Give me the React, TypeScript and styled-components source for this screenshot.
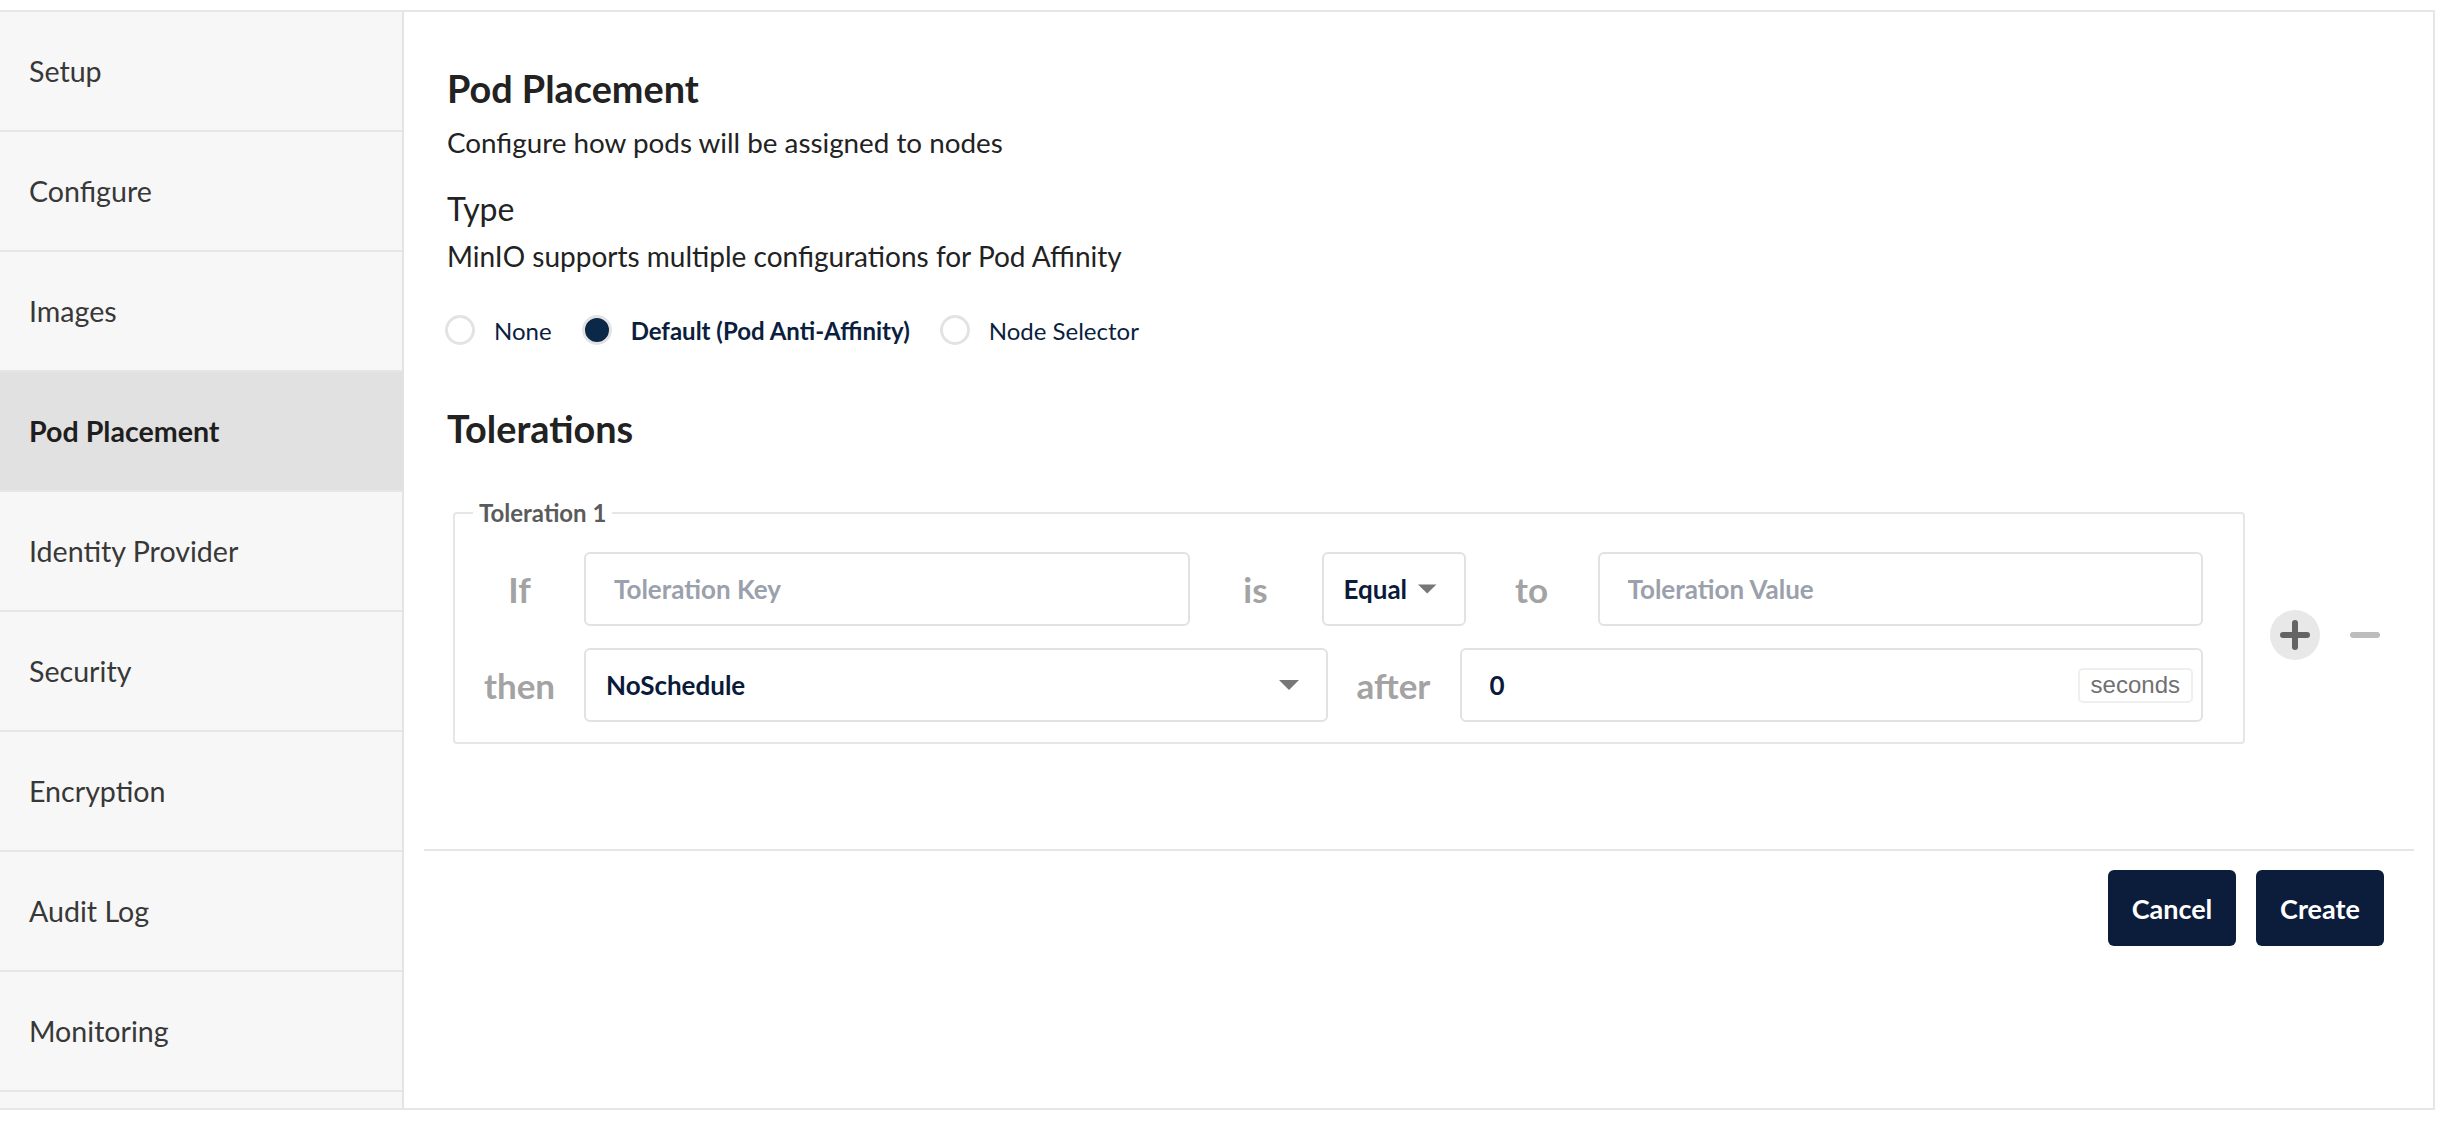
import React from "react";
import styled, { createGlobalStyle } from "styled-components";

const steps = [
  "Setup",
  "Configure",
  "Images",
  "Pod Placement",
  "Identity Provider",
  "Security",
  "Encryption",
  "Audit Log",
  "Monitoring",
];

const affinityTypes = [
  { label: "None", checked: false },
  { label: "Default (Pod Anti-Affinity)", checked: true },
  { label: "Node Selector", checked: false },
];

const GlobalStyle = createGlobalStyle`
  html, body {
    margin: 0;
    padding: 0;
    background: #ffffff;
  }
  body {
    font-family: Lato, "Noto Sans", sans-serif;
  }
  * {
    box-sizing: border-box;
  }
`;

const Arrow = () => (
  <svg width="20" height="10" viewBox="0 0 20 10">
    <path d="M0 0 L20 0 L10 10 Z" fill="#777777" />
  </svg>
);

const PlusIcon = () => (
  <svg width="30" height="30" viewBox="0 0 30 30">
    <path
      d="M15 3 V27 M3 15 H27"
      stroke="#646464"
      strokeWidth="6"
      strokeLinecap="round"
    />
  </svg>
);

const MinusIcon = () => (
  <svg width="30" height="6" viewBox="0 0 30 6">
    <path d="M3 3 H27" stroke="#bdbdbd" strokeWidth="6" strokeLinecap="round" />
  </svg>
);

export default function App() {
  return (
    <>
      <GlobalStyle />
      <Frame>
        <Sidebar>
          {steps.map((s) => (
            <NavItem key={s} $active={s === "Pod Placement"}>
              {s}
            </NavItem>
          ))}
        </Sidebar>
        <Main>
          <Content>
            <Title>Pod Placement</Title>
            <Description>Configure how pods will be assigned to nodes</Description>
            <SubTitle>Type</SubTitle>
            <TypeHint>MinIO supports multiple configurations for Pod Affinity</TypeHint>
            <RadioGroup>
              {affinityTypes.map((t) => (
                <RadioOption key={t.label} $checked={t.checked}>
                  <RadioDot $checked={t.checked} />
                  {t.label}
                </RadioOption>
              ))}
            </RadioGroup>

            <Title $spaced>Tolerations</Title>

            <TolerationRow>
              <TolerationSet>
                <Legend>Toleration 1</Legend>
                <Rows>
                  <Row $columns="129px 1fr 132px 144px 132px 1fr">
                    <Word>If</Word>
                    <TextField>
                      <Input placeholder="Toleration Key" />
                    </TextField>
                    <Word>is</Word>
                    <SelectBox>
                      Equal
                      <Arrow />
                    </SelectBox>
                    <Word>to</Word>
                    <TextField>
                      <Input placeholder="Toleration Value" />
                    </TextField>
                  </Row>
                  <Row $columns="129px 1fr 132px 1fr">
                    <Word>then</Word>
                    <SelectBox $spread>
                      NoSchedule
                      <Arrow />
                    </SelectBox>
                    <Word>after</Word>
                    <TextField>
                      <Input defaultValue="0" />
                      <Unit>seconds</Unit>
                    </TextField>
                  </Row>
                </Rows>
              </TolerationSet>
              <Actions>
                <AddButton>
                  <PlusIcon />
                </AddButton>
                <RemoveButton>
                  <MinusIcon />
                </RemoveButton>
              </Actions>
            </TolerationRow>
          </Content>
          <Footer>
            <Button>Cancel</Button>
            <Button>Create</Button>
          </Footer>
        </Main>
      </Frame>
    </>
  );
}

const Frame = styled.div`
  margin-top: 10px;
  width: 2435px;
  height: 1100px;
  border: 2px solid #e6e6e6;
  border-left: none;
  display: flex;
  overflow: hidden;
`;

const Sidebar = styled.nav`
  width: 404px;
  flex-shrink: 0;
  background: #f7f7f7;
  border-right: 2px solid #e3e3e3;
  display: flex;
  flex-direction: column;
`;

const NavItem = styled.div<{ $active?: boolean }>`
  height: 120px;
  flex-shrink: 0;
  display: flex;
  align-items: center;
  padding-left: 29px;
  border-bottom: 2px solid #e6e6e6;
  background: ${({ $active }) => ($active ? "#e1e1e1" : "transparent")};
  font-size: 28.6px;
  font-weight: ${({ $active }) => ($active ? 700 : 400)};
  color: ${({ $active }) => ($active ? "#1e1e1e" : "#383838")};
`;

const Main = styled.main`
  flex: 1;
  display: flex;
  flex-direction: column;
  padding-top: 55px;
  min-width: 0;
`;

const Content = styled.div`
  padding: 0 49px 0 43px;
`;

const Title = styled.h2<{ $spaced?: boolean }>`
  margin: ${({ $spaced }) => ($spaced ? "56px 0 0" : "0")};
  font-size: 37.8px;
  line-height: 44px;
  font-weight: 700;
  color: #222222;
`;

const Description = styled.p`
  margin: 15px 0 0;
  font-size: 27.8px;
  line-height: 34px;
  color: #222222;
`;

const SubTitle = styled.h3`
  margin: 30px 0 0;
  font-size: 32px;
  line-height: 38px;
  font-weight: 400;
  color: #222222;
`;

const TypeHint = styled(Description)`
  margin-top: 11px;
  font-size: 28px;
`;

const RadioGroup = styled.div`
  display: flex;
  align-items: center;
  height: 42px;
  margin: 36px 0 0 -2px;
`;

const RadioOption = styled.label<{ $checked?: boolean }>`
  display: flex;
  align-items: center;
  gap: 19px;
  margin-right: 30px;
  font-size: 24px;
  font-weight: ${({ $checked }) => ($checked ? 700 : 400)};
  color: #0b1e40;
`;

const RadioDot = styled.span<{ $checked?: boolean }>`
  width: 30px;
  height: 30px;
  border-radius: 50%;
  border: 3px solid #e3e3e3;
  background: ${({ $checked }) => ($checked ? "#0c2848" : "#ffffff")};
`;

const TolerationRow = styled.div`
  display: flex;
  align-items: center;
  margin-top: 48px;
`;

const TolerationSet = styled.fieldset`
  flex: 1;
  min-width: 0;
  margin: 0 0 0 6px;
  padding: 25px 40px 20px 0;
  border: 2px solid #e6e6e6;
  border-radius: 4px;
`;

const Legend = styled.legend`
  margin-left: 18px;
  padding: 0 6px;
  font-size: 24px;
  line-height: 28px;
  font-weight: 700;
  color: #5b5b5b;
`;

const Rows = styled.div`
  display: flex;
  flex-direction: column;
  gap: 22px;
`;

const Row = styled.div<{ $columns: string }>`
  display: grid;
  grid-template-columns: ${({ $columns }) => $columns};
  align-items: center;
  height: 74px;
`;

const Word = styled.span`
  text-align: center;
  font-size: 35px;
  font-weight: 700;
  color: #a3a3a3;
`;

const TextField = styled.div`
  min-width: 0;
  height: 74px;
  display: flex;
  align-items: center;
  padding: 0 8px 0 28px;
  border: 2px solid #e2e2e2;
  border-radius: 6px;
  background: #ffffff;
`;

const Input = styled.input`
  flex: 1;
  min-width: 0;
  border: none;
  outline: none;
  padding: 0;
  background: transparent;
  font-family: Lato, "Noto Sans", sans-serif;
  font-size: 26px;
  font-weight: 700;
  color: #0a1a3a;

  &::placeholder {
    color: #9ba1ac;
    opacity: 1;
  }
`;

const SelectBox = styled.div<{ $spread?: boolean }>`
  min-width: 0;
  height: 74px;
  display: flex;
  align-items: center;
  justify-content: ${({ $spread }) => ($spread ? "space-between" : "flex-start")};
  gap: 11px;
  padding: 0 27px 0 20px;
  border: 2px solid #e2e2e2;
  border-radius: 6px;
  font-size: 26px;
  font-weight: 700;
  color: #0a1a3a;
`;

const Unit = styled.span`
  height: 35px;
  display: flex;
  align-items: center;
  padding: 0 11px;
  border: 2px solid #efefef;
  border-radius: 5px;
  font-family: "Liberation Sans", Arial, sans-serif;
  font-size: 24px;
  color: #707070;
`;

const Actions = styled.div`
  display: flex;
  align-items: center;
  gap: 30px;
  margin: 27px 4px 0 25px;
`;

const AddButton = styled.button`
  width: 50px;
  height: 50px;
  padding: 0;
  border: none;
  border-radius: 50%;
  background: #e8e8e8;
  display: flex;
  align-items: center;
  justify-content: center;
`;

const RemoveButton = styled.button`
  width: 30px;
  height: 30px;
  padding: 0;
  border: none;
  background: transparent;
  display: flex;
  align-items: center;
  justify-content: center;
`;

const Footer = styled.div`
  margin: 105px 19px 0 20px;
  padding: 19px 30px 0 0;
  border-top: 2px solid #e5e5e5;
  display: flex;
  justify-content: flex-end;
  gap: 20px;
`;

const Button = styled.button`
  width: 128px;
  height: 76px;
  border: none;
  border-radius: 6px;
  background: #0c1c3b;
  color: #ffffff;
  font-family: Lato, "Noto Sans", sans-serif;
  font-size: 27px;
  font-weight: 700;
`;
